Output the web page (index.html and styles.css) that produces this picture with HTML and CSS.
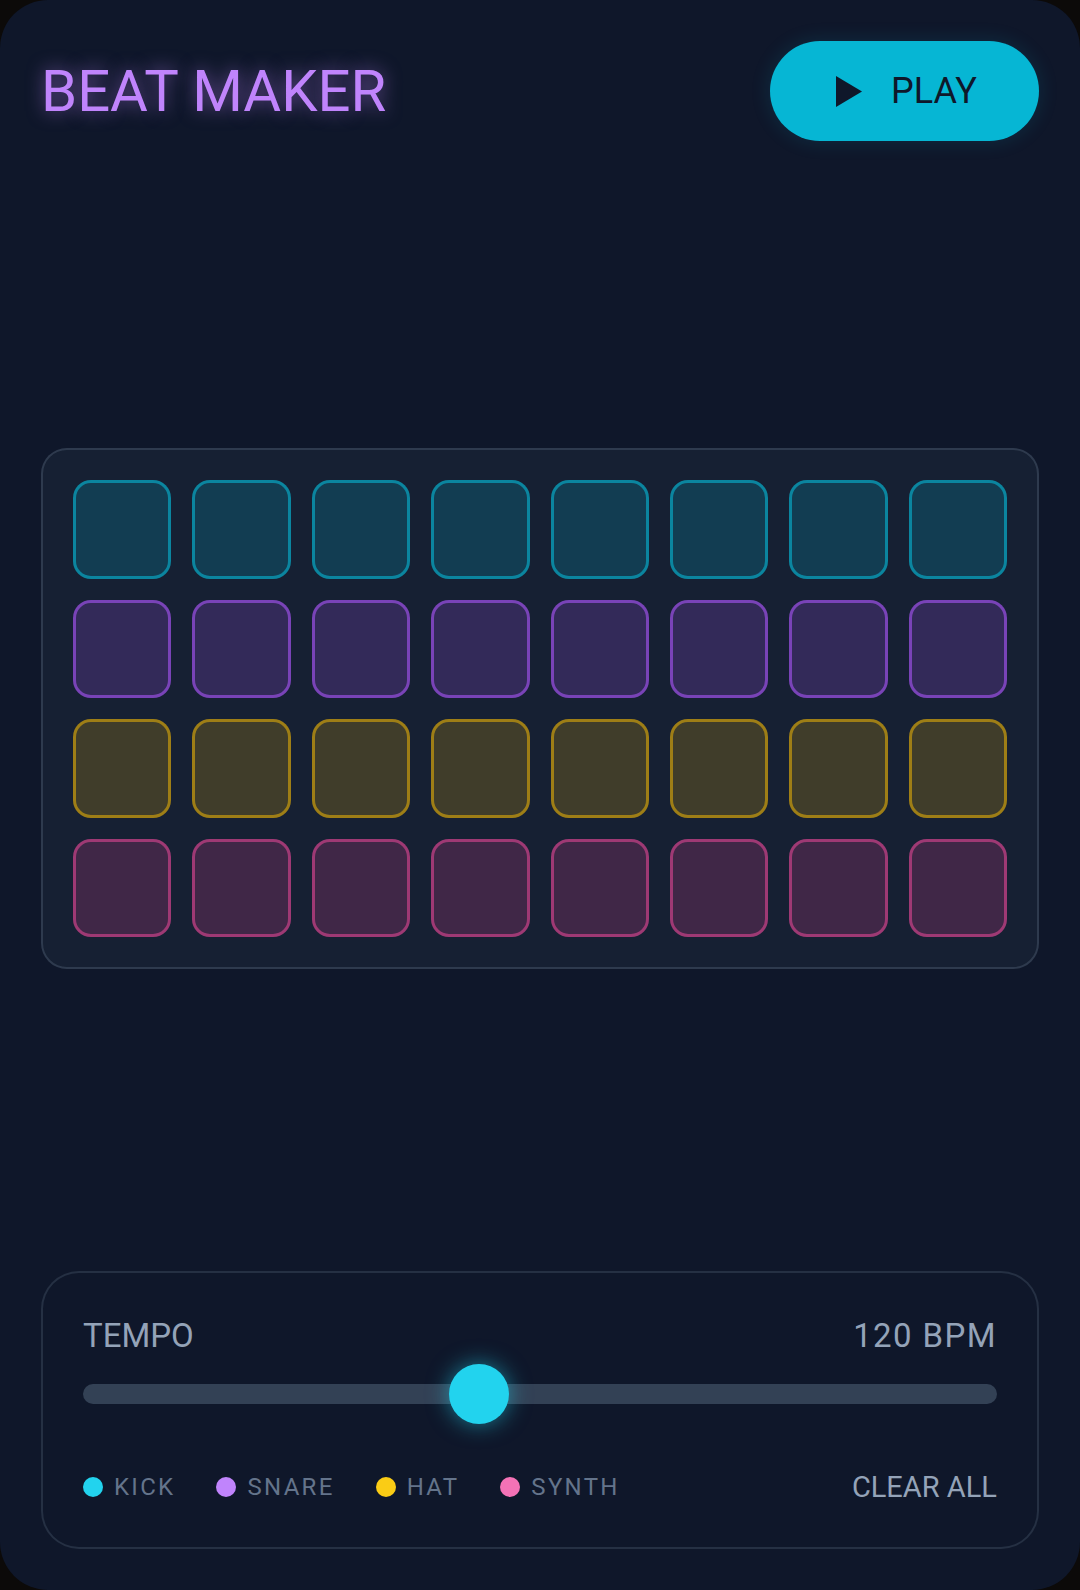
FILE: index.html
```html
<!DOCTYPE html>
<html lang="en">
<head>
<meta charset="utf-8">
<title>Beat Maker</title>
<link rel="stylesheet" href="styles.css">
</head>
<body>
<div class="app">
  <header class="header">
    <h1 class="title">BEAT MAKER</h1>
    <button class="play-btn" type="button">
      <svg class="play-icon" viewBox="0 0 26 31" width="26" height="31" aria-hidden="true"><polygon points="0,0 26,15.5 0,31"/></svg>
      <span>PLAY</span>
    </button>
  </header>

  <main class="stage">
    <section class="grid-card">
      <div class="pad-grid">
        <button class="pad pad-kick"></button><button class="pad pad-kick"></button><button class="pad pad-kick"></button><button class="pad pad-kick"></button><button class="pad pad-kick"></button><button class="pad pad-kick"></button><button class="pad pad-kick"></button><button class="pad pad-kick"></button>
        <button class="pad pad-snare"></button><button class="pad pad-snare"></button><button class="pad pad-snare"></button><button class="pad pad-snare"></button><button class="pad pad-snare"></button><button class="pad pad-snare"></button><button class="pad pad-snare"></button><button class="pad pad-snare"></button>
        <button class="pad pad-hat"></button><button class="pad pad-hat"></button><button class="pad pad-hat"></button><button class="pad pad-hat"></button><button class="pad pad-hat"></button><button class="pad pad-hat"></button><button class="pad pad-hat"></button><button class="pad pad-hat"></button>
        <button class="pad pad-synth"></button><button class="pad pad-synth"></button><button class="pad pad-synth"></button><button class="pad pad-synth"></button><button class="pad pad-synth"></button><button class="pad pad-synth"></button><button class="pad pad-synth"></button><button class="pad pad-synth"></button>
      </div>
    </section>
  </main>

  <section class="tempo-card">
    <div class="tempo-row">
      <span class="tempo-label">TEMPO</span>
      <span class="tempo-value">120 BPM</span>
    </div>
    <div class="slider">
      <div class="slider-track"></div>
      <div class="slider-thumb" style="left: calc((100% - 60px) * 0.4286);"></div>
    </div>
    <div class="legend-row">
      <ul class="legend">
        <li class="legend-item"><span class="dot dot-kick"></span>KICK</li>
        <li class="legend-item"><span class="dot dot-snare"></span>SNARE</li>
        <li class="legend-item"><span class="dot dot-hat"></span>HAT</li>
        <li class="legend-item"><span class="dot dot-synth"></span>SYNTH</li>
      </ul>
      <button class="clear-btn" type="button">CLEAR ALL</button>
    </div>
  </section>
</div>
</body>
</html>
```

FILE: styles.css
```css
* { box-sizing: border-box; }

html, body {
  margin: 0;
  padding: 0;
  background: #0c0a09;
}

body {
  font-family: Roboto, "Liberation Sans", sans-serif;
}

.app {
  width: 1080px;
  height: 1590px;
  background: #0f172a;
  border-radius: 48px;
  padding: 41px;
  display: flex;
  flex-direction: column;
  overflow: hidden;
}

.header {
  display: flex;
  align-items: center;
  justify-content: space-between;
  height: 100px;
}

.title {
  margin: 0;
  font-size: 58px;
  font-weight: 400;
  color: #c084fc;
  text-shadow: 0 0 18px rgba(192, 132, 252, 0.55);
  line-height: 1;
}

.play-btn {
  width: 269px;
  height: 100px;
  border: none;
  border-radius: 50px;
  background: #06b6d4;
  color: #0f172a;
  display: flex;
  align-items: center;
  justify-content: center;
  gap: 29px;
  font-family: Roboto, "Liberation Sans", sans-serif;
  font-size: 36px;
  font-weight: 400;
  padding: 0 0 0 4px;
  box-shadow: 0 0 20px rgba(6, 182, 212, 0.15);
}

.play-icon {
  fill: #0f172a;
  display: block;
}

.stage {
  flex: 1;
  display: flex;
  align-items: center;
  padding-top: 5px;
}

.grid-card {
  width: 100%;
  background: rgba(30, 41, 59, 0.5);
  border: 2px solid rgba(71, 85, 105, 0.5);
  border-radius: 26px;
  padding: 30px;
}

.pad-grid {
  display: grid;
  grid-template-columns: repeat(8, 1fr);
  gap: 21px;
}

.pad {
  aspect-ratio: 1 / 1;
  border-radius: 18px;
  border: 3px solid;
  padding: 0;
  margin: 0;
}

.pad-kick { background: rgba(6, 182, 212, 0.2); border-color: rgba(6, 182, 212, 0.6); }
.pad-snare { background: rgba(168, 85, 247, 0.2); border-color: rgba(168, 85, 247, 0.6); }
.pad-hat { background: rgba(234, 179, 8, 0.2); border-color: rgba(234, 179, 8, 0.56); }
.pad-synth { background: rgba(236, 72, 153, 0.2); border-color: rgba(236, 72, 153, 0.55); }

.tempo-card {
  border: 2px solid rgba(51, 65, 85, 0.6);
  border-radius: 38px;
  padding: 44px 40px 43px 40px;
  background: #0f172a;
}

.tempo-row {
  display: flex;
  justify-content: space-between;
  align-items: center;
  font-size: 33px;
  color: #94a3b8;
  line-height: 1.172;
}

.tempo-value {
  letter-spacing: 1.4px;
}

.slider {
  position: relative;
  height: 60px;
  margin-top: 8px;
  display: flex;
  align-items: center;
}

.slider-track {
  width: 100%;
  height: 20px;
  border-radius: 10px;
  background: #334155;
}

.slider-thumb {
  position: absolute;
  top: 0;
  width: 60px;
  height: 60px;
  border-radius: 50%;
  background: #22d3ee;
  box-shadow: 0 0 22px rgba(34, 211, 238, 0.55);
}

.legend-row {
  display: flex;
  align-items: center;
  justify-content: space-between;
  margin-top: 46px;
  height: 34px;
}

.legend {
  list-style: none;
  margin: 0;
  padding: 0;
  display: flex;
  align-items: center;
  gap: 41px;
}

.legend-item {
  display: flex;
  align-items: center;
  gap: 11px;
  font-size: 24px;
  letter-spacing: 2.3px;
  color: #64748b;
  line-height: 28px;
}

.dot {
  width: 20px;
  height: 20px;
  border-radius: 50%;
  display: block;
}

.dot-kick { background: #22d3ee; }
.dot-snare { background: #c084fc; }
.dot-hat { background: #facc15; }
.dot-synth { background: #f472b6; }

.clear-btn {
  background: none;
  border: none;
  padding: 0;
  font-family: Roboto, "Liberation Sans", sans-serif;
  font-size: 29px;
  color: #94a3b8;
  line-height: 34px;
}
```
